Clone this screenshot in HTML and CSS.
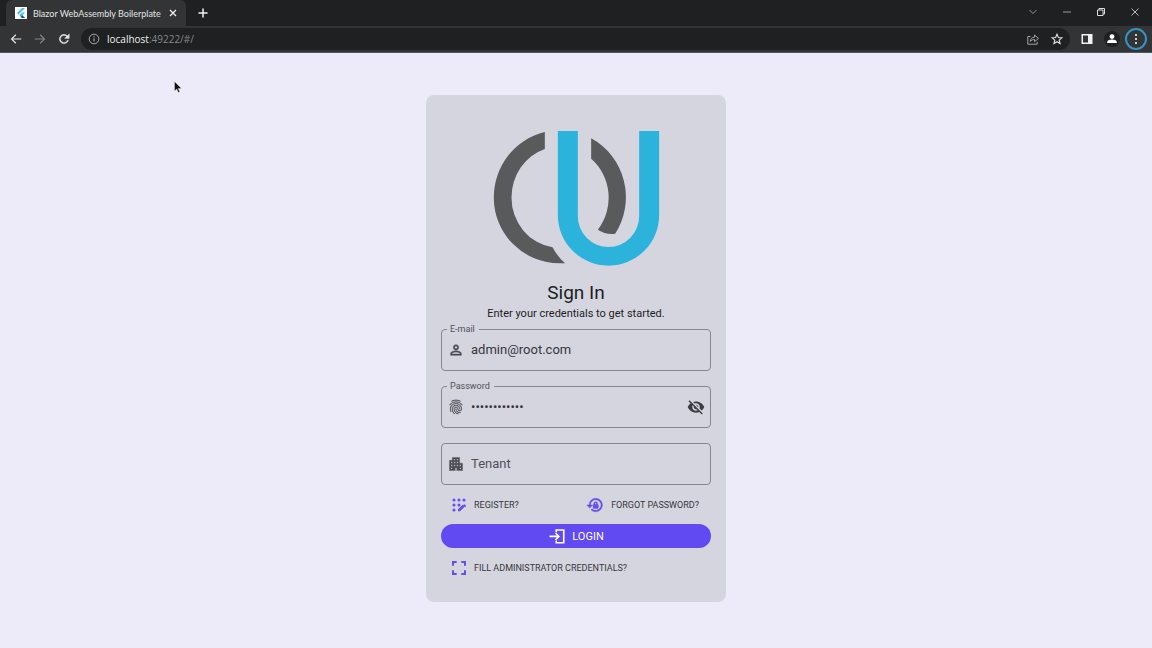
FILE: index.html
```html
<!DOCTYPE html>
<html lang="en">
<head>
<meta charset="utf-8">
<meta name="viewport" content="width=device-width, initial-scale=1">
<title>Blazor WebAssembly Boilerplate</title>
<link rel="stylesheet" href="styles.css">
</head>
<body>
<header class="browser">
  <div class="tabstrip">
    <div class="tab">
      <svg class="favicon" viewBox="0 0 24 24"><path fill="#fff" d="M0 0h24v24H0z"/><path fill="#45bdf0" d="M14 2 4 12l3 3L20 2zM14 11l-5.500 5.500L14 22h6l-5.500-5.500L20 11z"/><path fill="#17599c" d="m11.500 19.500 2.500 2.500h6l-5.500-5.500z"/></svg>
      <span class="tab-title">Blazor WebAssembly Boilerplate</span>
      <button class="chrome-btn tab-close" aria-label="Close tab"><svg class="icon-xs" viewBox="0 0 10 10"><path d="m2 2 6 6m0-6-6 6" stroke="#eee" stroke-width="1.300"/></svg></button>
    </div>
    <button class="chrome-btn new-tab" aria-label="New tab"><svg class="icon-xs" viewBox="0 0 10 10"><path d="M5 .5v9M.5 5h9" stroke="#f2f2f2" stroke-width="1.500"/></svg></button>
    <div class="window-controls">
      <button class="chrome-btn" aria-label="Search tabs"><svg class="icon-xs" viewBox="0 0 10 10"><path d="m1.500 3 3.500 3.500L8.500 3" stroke="#999" fill="none"/></svg></button>
      <button class="chrome-btn" aria-label="Minimize"><svg class="icon-xs" viewBox="0 0 10 10"><path d="M1 5h8" stroke="#999"/></svg></button>
      <button class="chrome-btn" aria-label="Restore"><svg class="icon-xs" viewBox="0 0 10 10"><path d="M1.500 3h5.500v5.500H1.500zM3 3V1.500h5.500V7H7" stroke="#ddd" fill="none"/></svg></button>
      <button class="chrome-btn" aria-label="Close"><svg class="icon-xs" viewBox="0 0 10 10"><path d="m1.500 1.500 7 7m0-7-7 7" stroke="#bbb"/></svg></button>
    </div>
  </div>
  <div class="toolbar">
    <button class="chrome-btn" aria-label="Back"><svg class="icon-nav" viewBox="0 0 24 24"><path fill="#e6e6e6" d="M21 11H6.800l5.600-5.600L11 4l-8 8 8 8 1.400-1.400L6.800 13H21z"/></svg></button>
    <button class="chrome-btn" aria-label="Forward"><svg class="icon-nav" viewBox="0 0 24 24"><path fill="#838688" d="M3 11h14.200l-5.600-5.600L13 4l8 8-8 8-1.400-1.400 5.600-5.600H3z"/></svg></button>
    <button class="chrome-btn" aria-label="Reload"><svg class="icon-nav" viewBox="0 0 24 24"><path fill="#e6e6e6" d="M17.650 6.350A8 8 0 1 0 19.730 14h-2.080A6 6 0 1 1 12 6c1.660 0 3.140.69 4.220 1.780L13 11h8V3z" stroke="#e6e6e6" stroke-width=".6"/></svg></button>
    <div class="address">
      <svg class="icon-info" viewBox="0 0 12 12"><circle cx="6" cy="6" r="4.800" fill="none" stroke="#aaa"/><path d="M6 5.300v3.200M6 3.200v1.200" stroke="#bbb"/></svg>
      <span class="url"><span class="host">localhost</span>:49222/#/</span>
      <button class="chrome-btn" aria-label="Share"><svg class="icon-act" viewBox="0 0 14 14"><path d="M4.500 4.500H1.800v7.700h9.400V9.800M4.300 9.500C4.500 6.700 6 5.300 8.500 5.200V3l4 3.400-4 3.300V7.500C6.700 7.500 5.400 8 4.300 9.500z" fill="none" stroke="#a2a5a7"/></svg></button>
      <button class="chrome-btn" aria-label="Bookmark"><svg class="icon-act" viewBox="0 0 24 24"><path d="m12 4 2.400 5.500 5.900.5-4.500 3.900 1.400 5.800L12 16.600l-5.200 3.100 1.400-5.800L3.700 10l5.900-.5z" fill="none" stroke="#ddd" stroke-width="2"/></svg></button>
    </div>
    <button class="chrome-btn" aria-label="Side panel"><svg class="icon-act" viewBox="0 0 14 14"><path fill="#f2f2f2" fill-rule="evenodd" d="M1.500 2h11v10h-11zM3 3.500v7h5v-7z"/></svg></button>
    <button class="chrome-btn profile" aria-label="Profile"><svg class="icon-act" viewBox="0 0 14 14"><circle cx="7" cy="4.600" r="2.400" fill="#fff"/><path fill="#fff" d="M2.200 11V10c0-2 3-2.600 4.800-2.600s4.800.6 4.800 2.600v1z"/></svg></button>
    <button class="chrome-btn menu" aria-label="Menu"><svg class="icon-act" viewBox="0 0 14 14" fill="#f2f2f2"><circle cx="7" cy="3" r="1.100"/><circle cx="7" cy="7" r="1.100"/><circle cx="7" cy="11" r="1.100"/></svg></button>
  </div>
</header>

<main class="page">
  <form class="card">
    <svg class="logo" viewBox="39 48 500 408" role="img" aria-label="Logo">
      <path fill="#585a5b" d="M194 51A197 201 0 0 0 41 248A197 197 0 0 0 238 445H255Q232 425 217 397A145 151 0 0 1 94 248A145 153 0 0 1 194 102zM333 70A197 200 0 0 1 405 356Q377 360 353 344A145 152 0 0 0 333 131z"/>
      <path fill="#2cb3dc" d="M233 48H293V304A92 92 0 0 0 477 304V48H537V300A152 152 0 0 1 233 300z"/>
    </svg>
    <h1 class="title">Sign In</h1>
    <p class="subtitle">Enter your credentials to get started.</p>

    <div class="fields">
      <div class="field">
        <label class="field-label" for="email">E-mail</label>
        <svg class="icon" viewBox="0 0 24 24"><path stroke="#4a4a50" stroke-width=".7" d="M12 5.900a2.100 2.100 0 1 1 0 4.200 2.100 2.100 0 0 1 0-4.200m0 9c2.970 0 6.100 1.460 6.100 2.100v1.100H5.900V17c0-.64 3.130-2.100 6.100-2.100M12 4a4 4 0 1 0 0 8 4 4 0 0 0 0-8m0 9c-2.670 0-8 1.340-8 4v3h16v-3c0-2.660-5.330-4-8-4"/></svg>
        <input class="field-input" id="email" type="email" value="admin@root.com">
      </div>
      <div class="field">
        <label class="field-label" for="password">Password</label>
        <svg class="icon" viewBox="1 1 22 22"><path stroke="#4a4a50" stroke-width=".3" d="M17.810 4.470c-.08 0-.16-.02-.23-.06C15.660 3.420 14 3 12.010 3c-1.980 0-3.860.47-5.570 1.410-.24.13-.54.04-.68-.2-.13-.24-.04-.55.2-.68C7.820 2.520 9.860 2 12.010 2c2.130 0 3.990.47 6.030 1.520.25.13.34.43.21.67-.09.18-.26.28-.44.28zM3.500 9.720c-.1 0-.2-.03-.29-.09-.23-.16-.28-.47-.12-.7.990-1.400 2.250-2.500 3.750-3.270C9.980 4.040 14 4.030 17.150 5.650c1.500.77 2.760 1.860 3.750 3.250.16.22.11.54-.12.7-.23.16-.54.11-.7-.12-.9-1.260-2.040-2.250-3.390-2.940-2.870-1.470-6.540-1.470-9.400.01-1.360.7-2.500 1.700-3.400 2.960-.08.14-.23.21-.39.21zm6.250 12.070c-.13 0-.26-.05-.35-.15-.87-.87-1.340-1.430-2.010-2.640-.69-1.230-1.050-2.730-1.050-4.340 0-2.970 2.540-5.390 5.660-5.390s5.660 2.420 5.660 5.390c0 .28-.22.5-.5.5s-.5-.22-.5-.5c0-2.420-2.090-4.390-4.660-4.390s-4.660 1.970-4.660 4.390c0 1.440.32 2.770.93 3.850.64 1.150 1.080 1.640 1.850 2.420.19.2.19.51 0 .71-.11.1-.24.15-.37.15zm7.170-1.850c-1.190 0-2.240-.3-3.100-.89-1.490-1.010-2.380-2.650-2.380-4.390 0-.28.22-.5.5-.5s.5.22.5.5c0 1.410.72 2.740 1.940 3.560.71.48 1.540.71 2.540.71.240 0 .64-.03 1.040-.1.270-.05.53.13.58.41.05.27-.13.53-.41.58-.57.11-1.070.12-1.210.12zM14.910 22c-.04 0-.09-.01-.13-.02-1.590-.44-2.630-1.030-3.720-2.100-1.400-1.390-2.170-3.240-2.170-5.220 0-1.620 1.380-2.940 3.080-2.940s3.080 1.320 3.080 2.940c0 1.070.93 1.940 2.080 1.940s2.080-.87 2.080-1.940c0-3.770-3.250-6.830-7.250-6.830-2.840 0-5.440 1.580-6.610 4.030-.39.81-.59 1.760-.59 2.800 0 .78.07 2.010.67 3.610.1.260-.03.55-.29.64-.26.1-.55-.04-.64-.29-.49-1.310-.73-2.610-.73-3.960 0-1.200.23-2.290.68-3.240 1.330-2.790 4.280-4.600 7.510-4.600 4.550 0 8.250 3.510 8.250 7.830 0 1.620-1.380 2.940-3.080 2.940s-3.080-1.320-3.080-2.940c0-1.070-.93-1.940-2.080-1.940s-2.080.87-2.080 1.940c0 1.710.66 3.310 1.870 4.510.95.94 1.860 1.460 3.270 1.850.27.07.42.35.35.61-.05.23-.26.38-.47.38z"/></svg>
        <input class="field-input" id="password" type="password" value="passwordroot">
        <button class="reveal" type="button" aria-label="Show password"><svg class="icon-eye" viewBox="0 0 24 24"><path d="M12 7c2.760 0 5 2.240 5 5 0 .65-.13 1.260-.36 1.830l2.920 2.920c1.510-1.260 2.700-2.890 3.430-4.750-1.730-4.390-6-7.500-11-7.500-1.400 0-2.740.25-3.980.7l2.160 2.160C10.740 7.130 11.350 7 12 7zM2 4.270l2.280 2.280.46.46C3.080 8.300 1.780 10.020 1 12c1.730 4.390 6 7.500 11 7.500 1.550 0 3.030-.3 4.380-.84l.42.42L19.730 22 21 20.730 3.270 3 2 4.270zM7.530 9.800l1.550 1.550c-.05.21-.08.43-.08.65 0 1.660 1.340 3 3 3 .22 0 .44-.03.65-.08l1.550 1.550c-.67.33-1.410.53-2.200.53-2.760 0-5-2.240-5-5 0-.79.2-1.530.53-2.200zm4.310-.78 3.150 3.150.02-.16c0-1.660-1.340-3-3-3l-.17.01z"/></svg></button>
      </div>
      <div class="field">
        <svg class="icon" viewBox="1 1 22 22"><path d="M17 11V3H7v4H3v14h8v-4h2v4h8V11h-4zM7 19H5v-2h2v2zm0-4H5v-2h2v2zm0-4H5V9h2v2zm4 4H9v-2h2v2zm0-4H9V9h2v2zm0-4H9V5h2v2zm4 8h-2v-2h2v2zm0-4h-2V9h2v2zm0-4h-2V5h2v2zm4 12h-2v-2h2v2zm0-4h-2v-2h2v2z" stroke="#4a4a50" stroke-width=".4"/></svg>
        <input class="field-input" type="text" placeholder="Tenant" aria-label="Tenant">
      </div>
    </div>

    <div class="links">
      <button class="text-btn" type="button"><svg class="icon accent" viewBox="0 0 24 24"><circle cx="4.500" cy="4.500" r="2.300"/><circle cx="12" cy="4.500" r="2.300"/><circle cx="19.500" cy="4.500" r="2.300"/><circle cx="4.500" cy="12" r="2.300"/><circle cx="12" cy="12" r="2.300"/><circle cx="4.500" cy="19.500" r="2.300"/><path d="M10.500 18.500v3h3l7-7-3-3zM22.200 12.800l-1.500-1.500a1 1 0 0 0-1.400 0l-1 1 3 3 .9-.9a1.200 1.200 0 0 0 0-1.600"/></svg>Register?</button>
      <button class="text-btn" type="button"><svg class="icon-eye accent" viewBox="0 0 24 24"><path stroke="#654cf5" stroke-width=".5" d="M13 3a9 9 0 0 0-9 9H1l3.900 4L9 12H6a7 7 0 1 1 2.100 5l-1.500 1.400A9 9 0 1 0 13 3m2.500 8v-1a2.500 2.500 0 0 0-5 0v1c-.6 0-1 .4-1 1v3.500c0 .6.400 1 1 1h5c.6 0 1-.4 1-1V12c0-.6-.4-1-1-1M14 11h-2v-1a1 1 0 0 1 2 0z"/></svg>Forgot Password?</button>
    </div>
    <button class="login" type="submit"><svg class="icon-eye" viewBox="0 0 24 24"><path fill="none" stroke="#fff" stroke-width="2.200" d="M11 7V4h10v17H11v-3M2 12.500h12M10 8l4.500 4.500L10 17"/></svg>Login</button>
    <div class="links">
      <button class="text-btn" type="button"><svg class="icon accent-line" viewBox="0 0 24 24"><path d="M3 8.500V3h5.500M15.500 3H21v5.500M21 15.500V21h-5.500M8.500 21H3v-5.500"/></svg>Fill Administrator Credentials?</button>
    </div>
  </form>
  <svg class="cursor" viewBox="0 0 8 12"><path d="M.5.500v9.500l2.200-2 1.600 3.500 1.500-.7-1.600-3.300H7.500z" fill="#111" stroke="#eee" stroke-width=".4"/></svg>
</main>
</body>
</html>
```
FILE: styles.css
```css
* { box-sizing: border-box; }

body {
  margin: 0;
  min-height: 100vh;
  display: flex;
  flex-direction: column;
  background: #edebfa;
  color: #1d1d22;
  font-family: Roboto, sans-serif;
}

button { font: inherit; color: inherit; }
svg { display: block; flex: none; }

/* Browser frame */
.browser {
  background: #1e2022;
  font-family: "Open Sans", sans-serif;
  border-bottom: 1px solid #55575a;
}
.chrome-btn {
  display: flex;
  align-items: center;
  justify-content: center;
  padding: 0;
  border: 0;
  background: none;
}
.tabstrip { display: flex; height: 26px; }
.tab {
  display: flex;
  align-items: center;
  width: 180px;
  margin-left: 6px;
  padding: 0 7px 0 9px;
  background: #323436;
  border-radius: 6px 6px 0 0;
}
.favicon { width: 12px; height: 12px; }
.tab-title {
  flex: 1;
  margin-left: 6px;
  color: #e4e5e6;
  font-family: Lato, sans-serif;
  font-size: 9px;
  white-space: nowrap;
}
.tab-close { width: 12px; }
.icon-xs { width: 10px; height: 10px; }
.new-tab { width: 33px; }
.window-controls { display: flex; margin-left: auto; padding-bottom: 3px; }
.window-controls .chrome-btn { width: 34px; }

.toolbar {
  display: flex;
  align-items: center;
  gap: 10px;
  height: 26px;
  padding: 0 5px 0 9px;
  background: #323436;
}
.icon-nav { width: 14px; height: 14px; }
.icon-act { width: 14px; height: 14px; }
.icon-info { width: 12px; height: 12px; }
.address {
  display: flex;
  flex: 1;
  align-items: center;
  gap: 10px;
  height: 22px;
  padding: 0 6px 0 7px;
  border-radius: 11px;
  background: #1e2022;
}
.url {
  flex: 1;
  margin-left: -3px;
  color: #85888b;
  font-size: 10px;
}
.host { color: #f0f0f0; }
.profile {
  width: 16px;
  height: 16px;
  border-radius: 8px;
  background: #1e2022;
}
.menu {
  width: 22px;
  height: 22px;
  margin-left: -5px;
  border: 2px solid #3594c4;
  border-radius: 11px;
}

/* Sign-in page */
.page {
  position: relative;
  flex: 1;
  padding: 42px 16px 32px;
}
.card {
  max-width: 300px;
  margin: 0 auto;
  padding: 36px 15px 15px;
  border-radius: 8px;
  background: #d5d5e0;
}
.logo { width: 167px; height: 136px; margin: 0 auto; }
.title {
  margin: 14px 0 0;
  font-size: 19px;
  line-height: 24px;
  font-weight: 400;
  text-align: center;
}
.subtitle {
  margin: 0 0 6px;
  font-size: 11px;
  line-height: 18px;
  text-align: center;
}
.fields { display: grid; gap: 15px; }
.field {
  position: relative;
  display: flex;
  align-items: center;
  gap: 7px;
  height: 42px;
  padding: 0 5px 0 6px;
  border: 1px solid #86868e;
  border-radius: 4px;
}
.field-label {
  position: absolute;
  top: -7px;
  left: 5px;
  padding: 0 4px 0 3px;
  background: #d5d5e0;
  color: #505058;
  font-size: 9px;
  line-height: 12px;
}
.field-input {
  flex: 1;
  min-width: 0;
  padding: 0 0 2px;
  border: 0;
  outline: 0;
  background: none;
  color: #36363c;
  font-family: Roboto, sans-serif;
  font-size: 13px;
}
.field-input::placeholder { color: #505058; opacity: 1; }
.icon { width: 16px; height: 16px; fill: #4a4a50; }
.icon-eye { width: 18px; height: 18px; fill: #3c3c42; }
.reveal { padding: 0; border: 0; background: none; }

.links {
  display: flex;
  align-items: center;
  justify-content: space-between;
  height: 39px;
  padding: 0 12px 0 10px;
}
.text-btn {
  display: flex;
  align-items: center;
  gap: 7px;
  padding: 0;
  border: 0;
  background: none;
  color: #36363c;
  font-size: 9px;
  text-transform: uppercase;
}
.accent { fill: #654cf5; }
.accent-line { fill: none; stroke: #654cf5; stroke-width: 3; }
.login {
  display: flex;
  align-items: center;
  justify-content: center;
  gap: 6px;
  width: 100%;
  height: 24px;
  padding: 0;
  border: 0;
  border-radius: 12px;
  background: #624af3;
  color: #fff;
  font-size: 11px;
  text-transform: uppercase;
}
.cursor {
  position: absolute;
  top: 28px;
  left: 174px;
  width: 8px;
  height: 12px;
}
```
